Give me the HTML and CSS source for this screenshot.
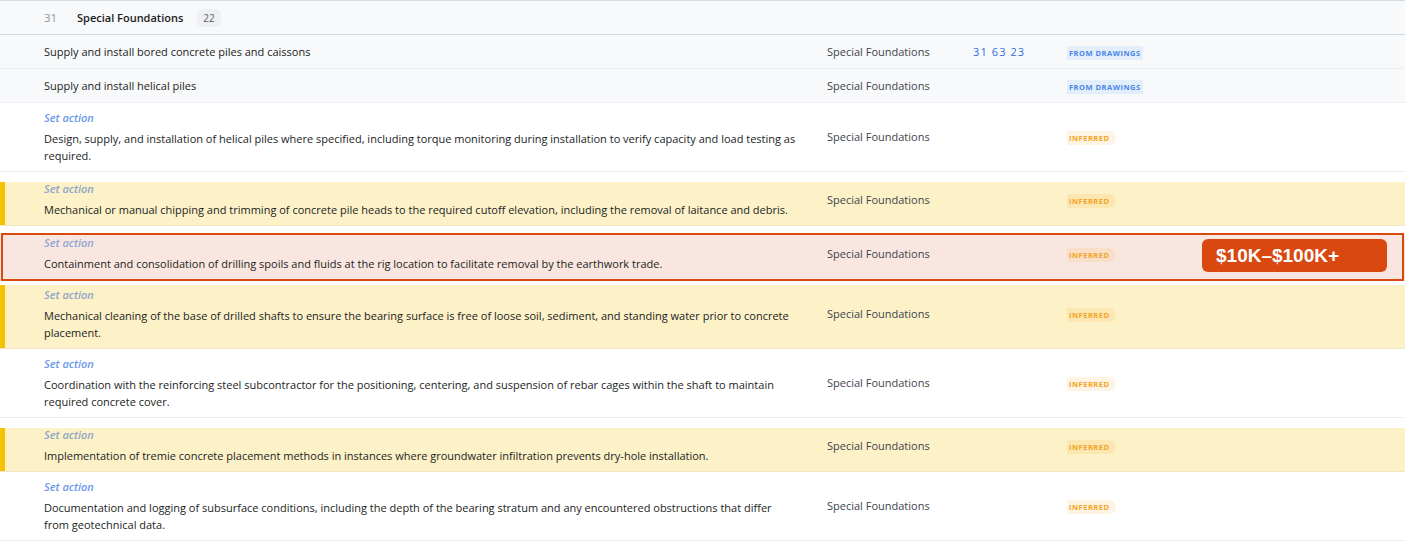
FILE: index.html
```html
<!DOCTYPE html>
<html lang="en">
<head>
  <meta charset="UTF-8">
  <title>Scope items - Special Foundations</title>
  <link rel="stylesheet" href="styles.css">
</head>
<body>

  <div class="scope">

    <!-- group header -->
    <div class="group-head">
      <span class="group-num">31</span>
      <span class="group-name">Special Foundations</span>
      <span class="count">22</span>
    </div>

    <div class="row drawn">
      <div class="desc">Supply and install bored concrete piles and caissons</div>
      <div class="cat">Special Foundations</div>
      <div class="code">31 63 23</div>
      <div><span class="tag tag-drawings">From drawings</span></div>
    </div>

    <div class="row drawn">
      <div class="desc">Supply and install helical piles</div>
      <div class="cat">Special Foundations</div>
      <div class="code"></div>
      <div><span class="tag tag-drawings">From drawings</span></div>
    </div>

    <div class="row">
      <div class="desc">
        <div class="action">Set action</div>
        <p>Design, supply, and installation of helical piles where specified, including torque monitoring during installation to verify capacity and load testing as required.</p>
      </div>
      <div class="cat">Special Foundations</div>
      <div class="code"></div>
      <div><span class="tag tag-inferred">Inferred</span></div>
    </div>

    <div class="row flag">
      <div class="desc">
        <div class="action">Set action</div>
        <p>Mechanical or manual chipping and trimming of concrete pile heads to the required cutoff elevation, including the removal of laitance and debris.</p>
      </div>
      <div class="cat">Special Foundations</div>
      <div class="code"></div>
      <div><span class="tag tag-inferred">Inferred</span></div>
    </div>

    <div class="row flag picked">
      <div class="desc">
        <div class="action">Set action</div>
        <p>Containment and consolidation of drilling spoils and fluids at the rig location to facilitate removal by the earthwork trade.</p>
      </div>
      <div class="cat">Special Foundations</div>
      <div class="code"></div>
      <div><span class="tag tag-inferred">Inferred</span></div>
      <span class="cost">$10K–$100K+</span>
    </div>

    <div class="row flag flag-near">
      <div class="desc">
        <div class="action">Set action</div>
        <p>Mechanical cleaning of the base of drilled shafts to ensure the bearing surface is free of loose soil, sediment, and standing water prior to concrete placement.</p>
      </div>
      <div class="cat">Special Foundations</div>
      <div class="code"></div>
      <div><span class="tag tag-inferred">Inferred</span></div>
    </div>

    <div class="row">
      <div class="desc">
        <div class="action">Set action</div>
        <p>Coordination with the reinforcing steel subcontractor for the positioning, centering, and suspension of rebar cages within the shaft to maintain required concrete cover.</p>
      </div>
      <div class="cat">Special Foundations</div>
      <div class="code"></div>
      <div><span class="tag tag-inferred">Inferred</span></div>
    </div>

    <div class="row flag">
      <div class="desc">
        <div class="action">Set action</div>
        <p>Implementation of tremie concrete placement methods in instances where groundwater infiltration prevents dry-hole installation.</p>
      </div>
      <div class="cat">Special Foundations</div>
      <div class="code"></div>
      <div><span class="tag tag-inferred">Inferred</span></div>
    </div>

    <div class="row">
      <div class="desc">
        <div class="action">Set action</div>
        <p>Documentation and logging of subsurface conditions, including the depth of the bearing stratum and any encountered obstructions that differ from geotechnical data.</p>
      </div>
      <div class="cat">Special Foundations</div>
      <div class="code"></div>
      <div><span class="tag tag-inferred">Inferred</span></div>
    </div>

  </div>

</body>
</html>
```

FILE: styles.css
```css
body { margin: 0; font-family: "Open Sans", "Noto Sans", sans-serif; font-size: 11px; color: #1a1e23; background: #fff; }
p { margin: 0; }

.scope { border-top: 1px solid #d6d9de; }

.group-head { display: flex; align-items: center; height: 33px; padding-left: 44px; background: #f8f9fa; border-bottom: 1px solid #d3d7dc; }
.group-num { width: 33px; color: #8c959f; font-size: 11.5px; }
.group-name { font-weight: 600; font-size: 11px; color: #1a1e23; }
.count { margin-left: 14px; padding: 2px 6px; background: #eef0f3; border-radius: 5px; font-size: 10px; color: #57606a; }

.row { position: relative; display: grid; grid-template-columns: 767px 130px 78px 1fr; column-gap: 16px; align-items: center; padding: 6px 0 7px 44px; line-height: 17px; border-bottom: 1px solid #eceef1; }
.row.drawn { padding-top: 8px; padding-bottom: 8px; background: #f8f9fa; }

.desc { padding-right: 13px; }
.action { margin-bottom: 4px; font-style: italic; font-weight: 600; color: #6b98ea; }

.cat { color: #3d444d; }
.code { color: #2f6fdb; letter-spacing: 1.1px; }

.tag { display: inline-block; padding: 0 2px; font-size: 7.5px; line-height: 14px; font-weight: 700; letter-spacing: 0.5px; text-transform: uppercase; }
.tag-drawings { background: #e3eefb; color: #4a86e8; }
.tag-inferred { padding-right: 6px; background: rgba(245, 170, 40, 0.13); color: #f2a526; border-radius: 0 8px 8px 0; }

/* flagged rows: yellow band with a bar on the left */
.row.flag { padding-top: 8px; padding-bottom: 7px; border-bottom-color: #f2e6c4;
  background: linear-gradient(#f7c300, #f7c300) 0 10px / 5px 100% no-repeat,
              linear-gradient(#fdf1c8, #fdf1c8) 0 10px / 100% 100% no-repeat; }
.row.flag-near { padding-top: 6px; background-position: 0 5px, 0 5px; }
.row.flag .action { color: #8ea7c6; }

.row.picked { background: linear-gradient(#fae6e0, #fae6e0) 0 8px / 100% 100% no-repeat; border-bottom-color: transparent; }
.row.picked::after { content: ""; position: absolute; top: 7px; left: 1px; right: 1px; bottom: -2px; border: 2px solid #d9480f; pointer-events: none; }
.row.picked .action { color: #8ea7d6; }

.cost { position: absolute; top: 13px; right: 18px; width: 171px; height: 33px; padding-left: 14px; background: #d9480f; border-radius: 6px; color: #fff; font-family: "Liberation Sans", Arial, sans-serif; font-weight: 700; font-size: 19px; line-height: 33px; }
```
